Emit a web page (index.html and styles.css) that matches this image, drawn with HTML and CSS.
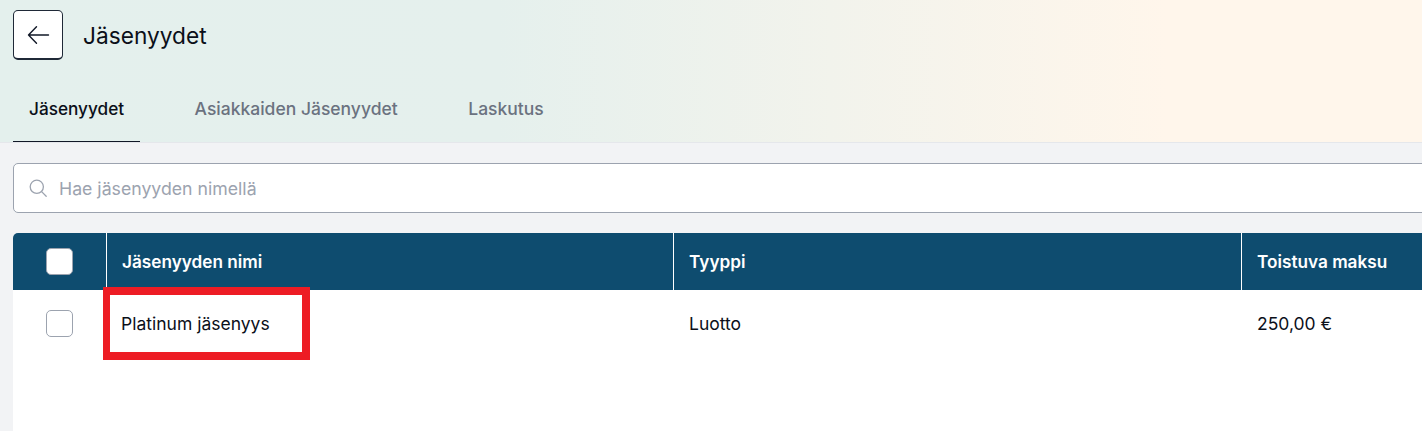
FILE: index.html
```html
<!DOCTYPE html>
<html lang="fi">
<head>
<meta charset="utf-8">
<title>Jäsenyydet</title>
<link rel="stylesheet" href="styles.css">
</head>
<body>
<header class="head">
  <div class="title-row">
    <button class="back" aria-label="Takaisin">
      <svg width="24" height="24" viewBox="0 0 24 24" fill="none" stroke="#111827" stroke-width="1.4" stroke-linecap="round" stroke-linejoin="round"><path d="M2.500 12H22.500M10.500 3.700 2.500 12l8 8.300"/></svg>
    </button>
    <h1 class="title">Jäsenyydet</h1>
  </div>
  <nav class="tabs">
    <a class="tab active">Jäsenyydet</a>
    <a class="tab">Asiakkaiden Jäsenyydet</a>
    <a class="tab">Laskutus</a>
  </nav>
</header>
<main class="content">
  <div class="inner">
    <div class="search">
      <svg width="20" height="20" viewBox="0 0 20 20" fill="none" stroke="#9ca3af" stroke-width="1.3" stroke-linecap="round"><circle cx="8.800" cy="8.800" r="6.600"/><path d="m13.600 13.600 4.600 4.600"/></svg>
      <span class="placeholder">Hae jäsenyyden nimellä</span>
    </div>
    <div class="table">
      <div class="row thead">
        <div class="cell check"><span class="box filled"></span></div>
        <div class="cell name">Jäsenyyden nimi</div>
        <div class="cell type">Tyyppi</div>
        <div class="cell pay">Toistuva maksu</div>
      </div>
      <div class="row tbody">
        <div class="cell check"><span class="box"></span></div>
        <div class="cell name"><span class="highlight"></span>Platinum jäsenyys</div>
        <div class="cell type">Luotto</div>
        <div class="cell pay">250,00 €</div>
      </div>
    </div>
  </div>
</main>
</body>
</html>
```
FILE: styles.css
```css
* { box-sizing: border-box; }
html, body { margin: 0; height: 100%; overflow: hidden; }
body {
  background: #f2f3f5;
  font-family: Inter, "Liberation Sans", sans-serif;
  color: #0b0f19;
  width: 1422px;
}
.head {
  height: 143px;
  padding: 10px 13px 0;
  background: linear-gradient(90deg, #e4f0ed 0%, #e5f0ed 35%, #fff6eb 82%, #fff6eb 100%);
  border-bottom: 1px solid #e5e7eb;
}
.title-row { display: flex; align-items: center; gap: 20px; height: 50px; }
.back {
  width: 50px; height: 50px; padding: 0;
  display: flex; align-items: center; justify-content: center;
  background: #fff;
  border: 1px solid #1f2937;
  border-bottom-width: 2px;
  border-radius: 5px;
}
.title { margin: 2px 0 0; font-size: 22.700px; line-height: 48px; font-weight: 400; color: #0b0f19; }
.tabs { display: flex; gap: 38.500px; margin-top: 21px; height: 61px; }
.tab {
  padding: 0 16px;
  font-size: 17.500px; line-height: 56px; font-weight: 500;
  color: #6b7280;
}
.tab.active { font-size: 17.200px; color: #0b0f19; border-bottom: 1px solid #111827; }
.content { padding: 20px 0 0 13px; height: 288px; overflow: hidden; }
.inner { width: 1487px; }
.search {
  height: 50px;
  display: flex; align-items: center; gap: 11px;
  padding-left: 14px;
  background: #fff;
  border: 1px solid #9ca3af;
  border-radius: 5px;
}
.placeholder { font-size: 17.700px; color: #9ca3af; }
.table { margin-top: 20px; background: #fff; border-radius: 5px 5px 0 0; height: 200px; }
.row { display: grid; grid-template-columns: 94px 567px 568px 1fr; }
.thead {
  height: 57px;
  background: #0e4c6f;
  color: #fff;
  font-weight: 600;
  border-radius: 5px 5px 0 0;
}
.thead .cell { border-right: 1px solid #fff; font-size: 17.200px; }
.thead .cell:last-child { border-right: 0; }
.tbody { height: 66px; color: #0b0f19; }
.cell { display: flex; align-items: center; padding-left: 15px; font-size: 17.500px; position: relative; }
.tbody .cell { font-weight: 400; }
.tbody .name { padding-left: 14px; }
.check { padding-left: 33px; }
.box {
  width: 27px; height: 27px;
  background: #fff;
  border: 1px solid #9ca3af;
  border-radius: 5px;
}
.highlight {
  position: absolute;
  left: -4px; top: -3px;
  width: 207px; height: 73px;
  border: 8px solid #ed1c24;
  border-left-width: 7.500px;
  pointer-events: none;
}
```
